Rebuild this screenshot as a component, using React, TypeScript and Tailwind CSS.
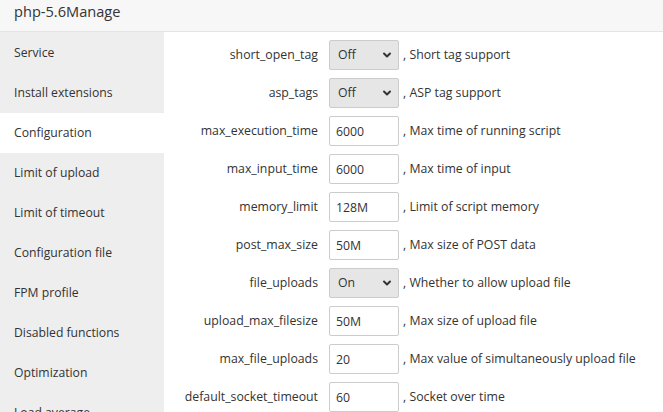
import { ChevronDown } from 'lucide-react';

const menu = [
  'Service',
  'Install extensions',
  'Configuration',
  'Limit of upload',
  'Limit of timeout',
  'Configuration file',
  'FPM profile',
  'Disabled functions',
  'Optimization',
  'Load average',
];

type Row = { name: string; value: string; select?: boolean; note: string };

const rows: Row[] = [
  { name: 'short_open_tag', value: 'Off', select: true, note: 'Short tag support' },
  { name: 'asp_tags', value: 'Off', select: true, note: 'ASP tag support' },
  { name: 'max_execution_time', value: '6000', note: 'Max time of running script' },
  { name: 'max_input_time', value: '6000', note: 'Max time of input' },
  { name: 'memory_limit', value: '128M', note: 'Limit of script memory' },
  { name: 'post_max_size', value: '50M', note: 'Max size of POST data' },
  { name: 'file_uploads', value: 'On', select: true, note: 'Whether to allow upload file' },
  { name: 'upload_max_filesize', value: '50M', note: 'Max size of upload file' },
  { name: 'max_file_uploads', value: '20', note: 'Max value of simultaneously upload file' },
  { name: 'default_socket_timeout', value: '60', note: 'Socket over time' },
];

const SelectBox = ({ value }: { value: string }) => (
  <div className="relative w-[70px] h-[30px]">
    <select
      defaultValue={value}
      className="appearance-none w-full h-full bg-[#e6e6e6] border border-[#cccccc] rounded-[2px] pl-[8px] text-[12.3px] text-[#333] outline-none"
    >
      <option>On</option>
      <option>Off</option>
    </select>
    <ChevronDown
      size={12}
      strokeWidth={4}
      className="absolute right-[6px] top-[9px] text-[#333] pointer-events-none"
    />
  </div>
);

export default function App() {
  return (
    <div
      className="w-[663px] h-[412px] overflow-hidden bg-white text-[#333]"
      style={{ fontFamily: '"Open Sans", "Liberation Sans", sans-serif' }}
    >
      <div className="h-[32px] bg-[#f7f7f7] border-b border-[#e4e4e4] pl-[14px] flex items-start">
        <span className="text-[14.6px] leading-[22px]">php-5.6Manage</span>
      </div>
      <div className="flex h-[380px]">
        <div className="w-[164px] shrink-0 bg-[#eeeeee] flex flex-col pt-[1px]">
          {menu.map((m) => (
            <div
              key={m}
              className={`h-[40px] shrink-0 flex items-center pl-[14px] text-[12.2px] ${
                m === 'Configuration' ? 'bg-white' : ''
              }`}
            >
              {m}
            </div>
          ))}
        </div>
        <div className="flex-1 pt-[4px] flex flex-col">
          {rows.map((r) => (
            <div key={r.name} className="flex items-center h-[38px] shrink-0 text-[12.3px]">
              <div className="w-[165px] text-right pr-[11px]">{r.name}</div>
              {r.select ? (
                <SelectBox value={r.value} />
              ) : (
                <input
                  defaultValue={r.value}
                  className="w-[70px] h-[30px] border border-[#cccccc] rounded-[2px] pl-[6px] text-[12.3px] text-[#333] outline-none"
                />
              )}
              <span className="ml-[4px] whitespace-nowrap">, {r.note}</span>
            </div>
          ))}
        </div>
      </div>
    </div>
  );
}
